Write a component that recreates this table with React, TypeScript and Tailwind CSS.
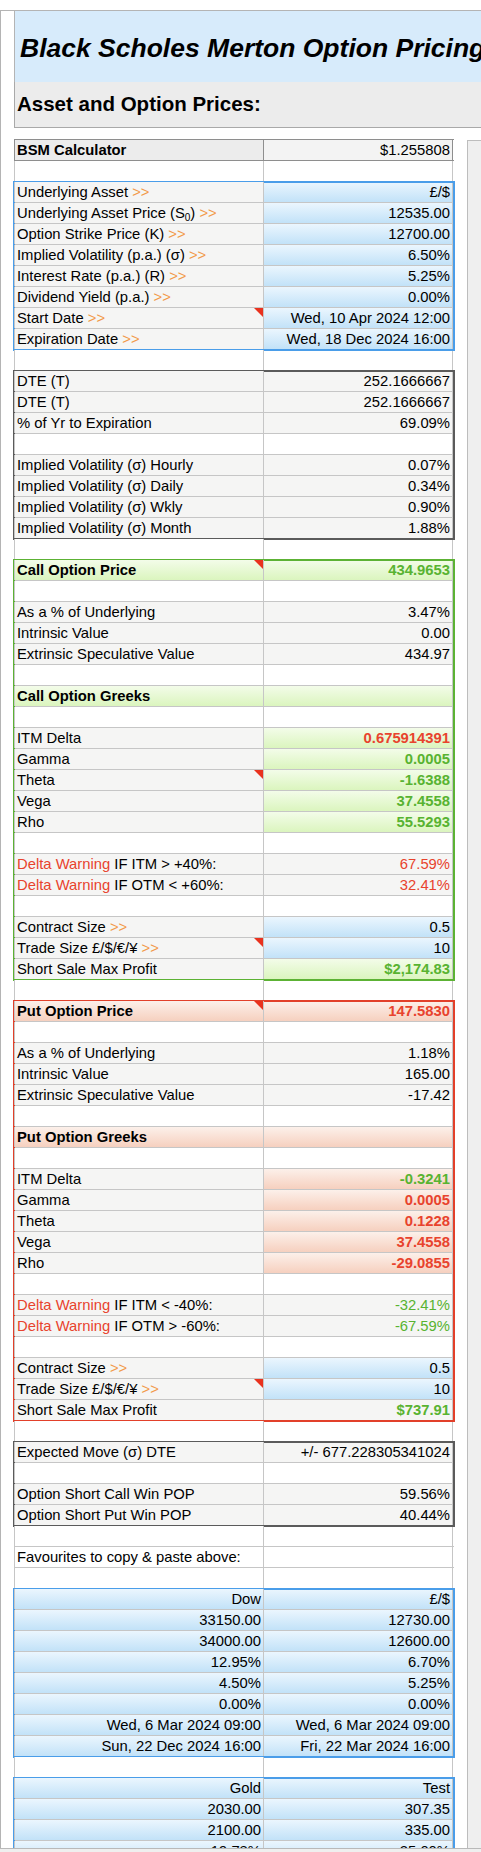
import React from "react";

type Bg = "w" | "p" | "b" | "g" | "r" | "s";

type RowDef = {
  l?: React.ReactNode;
  v?: React.ReactNode;
  lb?: Bg;
  vb?: Bg;
  vc?: string;
  vbold?: boolean;
  lbold?: boolean;
  tri?: boolean;
  lr?: boolean;
};

const bgClass: Record<Bg, string> = {
  w: "bg-white",
  p: "bg-[#f5f5f4]",
  s: "bg-[#ececec]",
  b: "bg-linear-to-b from-[#ebf6fe] to-[#c2e2f8]",
  g: "bg-linear-to-b from-[#f3fce9] to-[#dbf5be]",
  r: "bg-linear-to-b from-[#fcf0ea] to-[#f6d0bf]",
};

const RED = "text-[#e8432d]";
const GREEN = "text-[#58b331]";

const Arrow = () => <span className="text-[#f29a4a]">&gt;&gt;</span>;

const A = ({ children }: { children: React.ReactNode }) => (
  <>
    {children} <Arrow />
  </>
);

const Warn = ({ rest }: { rest: string }) => (
  <>
    <span className={RED}>Delta Warning</span> {rest}
  </>
);

function Row({ r }: { r: RowDef }) {
  const lb = r.lb ?? (r.l ? "p" : "w");
  const vb = r.vb ?? (r.l || r.v ? "p" : "w");
  return (
    <div className="flex h-[21px] border-b border-[#c6c6c6]">
      <div
        className={`relative w-[250px] border-x border-[#c6c6c6] px-[2px] whitespace-nowrap ${bgClass[lb]} ${
          r.lbold ? "font-bold" : ""
        } ${r.lr ? "text-right" : ""}`}
      >
        {r.l}
        {r.tri && (
          <span className="absolute top-0 right-0 h-0 w-0 border-t-[9px] border-l-[9px] border-t-[#e9321e] border-l-transparent" />
        )}
      </div>
      <div
        className={`w-[189px] border-r border-[#c6c6c6] px-[2px] text-right whitespace-nowrap ${bgClass[vb]} ${
          r.vc ?? ""
        } ${r.vbold ? "font-bold" : ""}`}
      >
        {r.v}
      </div>
    </div>
  );
}

function Group({ rows, color }: { rows: RowDef[]; color: string }) {
  return (
    <div className={`outline-2 -outline-offset-1 ${color}`}>
      {rows.map((r, i) => (
        <Row key={i} r={r} />
      ))}
    </div>
  );
}

const E: RowDef = {};

const inputs: RowDef[] = [
  { l: <A>Underlying Asset</A>, v: "£/$", vb: "b" },
  {
    l: (
      <A>
        Underlying Asset Price (S<sub className="text-[10px]">0</sub>)
      </A>
    ),
    v: "12535.00",
    vb: "b",
  },
  { l: <A>Option Strike Price (K)</A>, v: "12700.00", vb: "b" },
  { l: <A>Implied Volatility (p.a.) (σ)</A>, v: "6.50%", vb: "b" },
  { l: <A>Interest Rate (p.a.) (R)</A>, v: "5.25%", vb: "b" },
  { l: <A>Dividend Yield (p.a.)</A>, v: "0.00%", vb: "b" },
  { l: <A>Start Date</A>, v: "Wed, 10 Apr 2024 12:00", vb: "b", tri: true },
  { l: <A>Expiration Date</A>, v: "Wed, 18 Dec 2024 16:00", vb: "b" },
];

const dte: RowDef[] = [
  { l: "DTE (T)", v: "252.1666667" },
  { l: "DTE (T)", v: "252.1666667" },
  { l: "% of Yr to Expiration", v: "69.09%" },
  E,
  { l: "Implied Volatility (σ) Hourly", v: "0.07%" },
  { l: "Implied Volatility (σ) Daily", v: "0.34%" },
  { l: "Implied Volatility (σ) Wkly", v: "0.90%" },
  { l: "Implied Volatility (σ) Month", v: "1.88%" },
];

const call: RowDef[] = [
  { l: "Call Option Price", lbold: true, lb: "g", v: "434.9653", vb: "g", vc: GREEN, vbold: true, tri: true },
  E,
  { l: "As a % of Underlying", v: "3.47%" },
  { l: "Intrinsic Value", v: "0.00" },
  { l: "Extrinsic Speculative Value", v: "434.97" },
  E,
  { l: "Call Option Greeks", lbold: true, lb: "g", vb: "g" },
  E,
  { l: "ITM Delta", v: "0.675914391", vb: "g", vc: RED, vbold: true },
  { l: "Gamma", v: "0.0005", vb: "g", vc: GREEN, vbold: true },
  { l: "Theta", v: "-1.6388", vb: "g", vc: GREEN, vbold: true, tri: true },
  { l: "Vega", v: "37.4558", vb: "g", vc: GREEN, vbold: true },
  { l: "Rho", v: "55.5293", vb: "g", vc: GREEN, vbold: true },
  E,
  { l: <Warn rest="IF ITM > +40%:" />, v: "67.59%", vc: RED },
  { l: <Warn rest="IF OTM < +60%:" />, v: "32.41%", vc: RED },
  E,
  { l: <A>Contract Size</A>, v: "0.5", vb: "b" },
  { l: <A>Trade Size £/$/€/¥</A>, v: "10", vb: "b", tri: true },
  { l: "Short Sale Max Profit", v: "$2,174.83", vb: "g", vc: GREEN, vbold: true },
];

const put: RowDef[] = [
  { l: "Put Option Price", lbold: true, lb: "r", v: "147.5830", vb: "r", vc: RED, vbold: true, tri: true },
  E,
  { l: "As a % of Underlying", v: "1.18%" },
  { l: "Intrinsic Value", v: "165.00" },
  { l: "Extrinsic Speculative Value", v: "-17.42" },
  E,
  { l: "Put Option Greeks", lbold: true, lb: "r", vb: "r" },
  E,
  { l: "ITM Delta", v: "-0.3241", vb: "r", vc: GREEN, vbold: true },
  { l: "Gamma", v: "0.0005", vb: "r", vc: RED, vbold: true },
  { l: "Theta", v: "0.1228", vb: "r", vc: RED, vbold: true },
  { l: "Vega", v: "37.4558", vb: "r", vc: RED, vbold: true },
  { l: "Rho", v: "-29.0855", vb: "r", vc: RED, vbold: true },
  E,
  { l: <Warn rest="IF ITM < -40%:" />, v: "-32.41%", vc: GREEN },
  { l: <Warn rest="IF OTM > -60%:" />, v: "-67.59%", vc: GREEN },
  E,
  { l: <A>Contract Size</A>, v: "0.5", vb: "b" },
  { l: <A>Trade Size £/$/€/¥</A>, v: "10", vb: "b", tri: true },
  { l: "Short Sale Max Profit", v: "$737.91", vc: GREEN, vbold: true },
];

const pop: RowDef[] = [
  { l: "Expected Move (σ) DTE", v: "+/- 677.228305341024" },
  E,
  { l: "Option Short Call Win POP", v: "59.56%" },
  { l: "Option Short Put Win POP", v: "40.44%" },
];

const fav = (pairs: [string, string][]): RowDef[] =>
  pairs.map(([a, b]) => ({ l: a, v: b, lb: "b", vb: "b", lr: true }));

const fav1 = fav([
  ["Dow", "£/$"],
  ["33150.00", "12730.00"],
  ["34000.00", "12600.00"],
  ["12.95%", "6.70%"],
  ["4.50%", "5.25%"],
  ["0.00%", "0.00%"],
  ["Wed, 6 Mar 2024 09:00", "Wed, 6 Mar 2024 09:00"],
  ["Sun, 22 Dec 2024 16:00", "Fri, 22 Mar 2024 16:00"],
]);

const fav2 = fav([
  ["Gold", "Test"],
  ["2030.00", "307.35"],
  ["2100.00", "335.00"],
  ["19.78%", "25.00%"],
  ["5.00%", "5.25%"],
]);

export default function App() {
  return (
    <div className="relative h-[1852px] w-[481px] overflow-hidden bg-white font-['Liberation_Sans',Arial,sans-serif] text-black">
      <div className="mt-[10px] h-full border-t border-l border-[#b4b4b4] pl-[13px]">
        <div className="flex h-[71px] w-[700px] items-center border-l border-[#b4b4b4] bg-[#d7ebfb] pt-[4px] pl-[5px] text-[26.5px] font-bold italic whitespace-nowrap">
          Black Scholes Merton Option Pricing
        </div>
        <div className="flex h-[46px] w-[700px] items-center border-b border-l border-[#a9a9a9] bg-[#ececec] pl-[2px] text-[20.5px] font-bold whitespace-nowrap">
          Asset and Option Prices:
        </div>
        <div className="mt-[11px] flex text-[14.8px] leading-[20px]">
          <div className="w-[440px] border-t border-[#8e8e8e]">
            <div className="flex h-[21px] border-b border-[#8e8e8e]">
              <div className="w-[250px] border-x border-[#8e8e8e] bg-[#ececec] px-[2px] font-bold">BSM Calculator</div>
              <div className="w-[189px] border-r border-[#8e8e8e] bg-[#f3f3f3] px-[2px] text-right">$1.255808</div>
            </div>
            <Row r={E} />
            <Group rows={inputs} color="outline-[#4a9de9]" />
            <Row r={E} />
            <Group rows={dte} color="outline-[#5b5b5b]" />
            <Row r={E} />
            <Group rows={call} color="outline-[#5cb234]" />
            <Row r={E} />
            <Group rows={put} color="outline-[#e2402a]" />
            <Row r={E} />
            <Group rows={pop} color="outline-[#5b5b5b]" />
            <Row r={E} />
            <Row r={{ l: "Favourites to copy & paste above:", lb: "w", vb: "w" }} />
            <Row r={E} />
            <Group rows={fav1} color="outline-[#4a9de9]" />
            <Row r={E} />
            <Group rows={fav2} color="outline-[#4a9de9]" />
          </div>
          <div className="mt-[1px] ml-[13px] flex-1 border-t border-l border-[#bdbdbd] bg-[#efefef]" />
        </div>
      </div>
      <div className="absolute right-0 bottom-0 left-0 h-[4px] border-t border-[#b9b9b9] bg-[#efefef]" />
    </div>
  );
}
